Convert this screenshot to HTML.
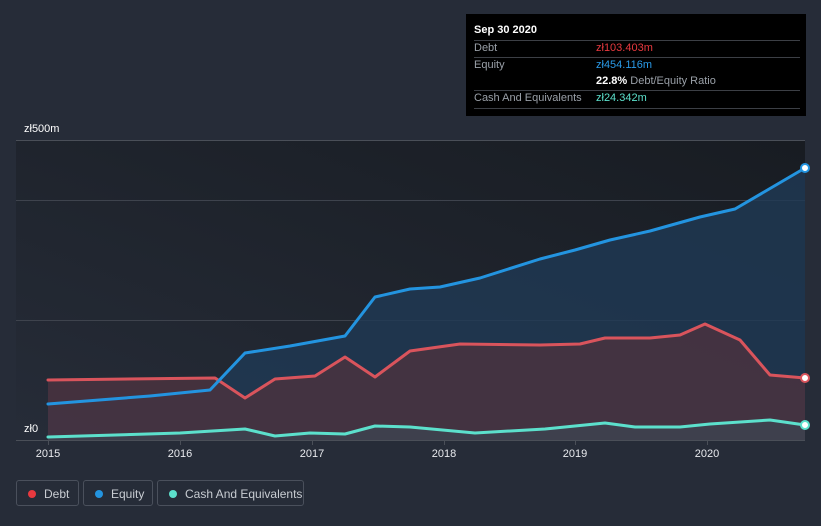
<!DOCTYPE html>
<html><head><meta charset="utf-8"><style>
body{margin:0;width:821px;height:526px;background:#262c38;font-family:"Liberation Sans",sans-serif;overflow:hidden;position:relative}
.tt{position:absolute;left:466px;top:14px;width:340px;height:102px;background:#000;}
.tt div{position:absolute;font-size:11px;color:#9aa0a8}
.ln{position:absolute;left:8px;width:326px;height:1px;background:#3c3f45}
.lg{position:absolute;top:480px;height:26px;border:1px solid #4a505c;border-radius:3px;color:#c8ccd2;font-size:12px;line-height:26px;box-sizing:border-box}
.lg i{position:absolute;left:11px;top:9px;width:8px;height:8px;border-radius:50%}
.lg span{position:absolute;left:27px}
</style></head><body>
<svg width="821" height="526" style="position:absolute;left:0;top:0">
<defs><linearGradient id="bg" x1="0" y1="1" x2="1" y2="0"><stop offset="0" stop-color="#262c38"/><stop offset="1" stop-color="#181c22"/></linearGradient></defs>
<rect x="16" y="140" width="789" height="300" fill="url(#bg)"/>
<g stroke="#3e434d" stroke-width="1"><line x1="16" y1="140.5" x2="805" y2="140.5" stroke="#4a4f58"/><line x1="16" y1="200.5" x2="805" y2="200.5"/><line x1="16" y1="320.5" x2="805" y2="320.5"/><line x1="16" y1="440.5" x2="805" y2="440.5" stroke="#4a4f58"/></g>
<g stroke="#4a4f58"><line x1="48.5" y1="440" x2="48.5" y2="445"/><line x1="180.5" y1="440" x2="180.5" y2="445"/><line x1="312.5" y1="440" x2="312.5" y2="445"/><line x1="444.5" y1="440" x2="444.5" y2="445"/><line x1="575.5" y1="440" x2="575.5" y2="445"/><line x1="707.5" y1="440" x2="707.5" y2="445"/></g>
<polygon fill="#1f3a55" fill-opacity="0.8" points="48,404 150,396 210,390 245,353 290,346 345,336 375,297 410,289 440,287 480,278 540,259 575,250 610,240 650,231 700,217 735,209 805,168 805,440 48,440"/>
<polygon fill="#4a3340" fill-opacity="0.85" points="48,380 215,378 245,398 275,379 315,376 345,357 375,377 410,351 460,344 540,345 580,344 605,338 650,338 680,335 705,324 740,340 770,375 805,378 805,440 48,440"/>
<polygon fill="#3c4a55" fill-opacity="0.6" points="48,437 180,433 245,429 275,436 310,433 345,434 375,426 410,427 475,433 545,429 605,423 635,427 680,427 710,424 770,420 805,425 805,440 48,440"/>
<g fill="none" stroke-width="3" stroke-linejoin="round" stroke-linecap="round">
<polyline stroke="#d9545c" points="48,380 215,378 245,398 275,379 315,376 345,357 375,377 410,351 460,344 540,345 580,344 605,338 650,338 680,335 705,324 740,340 770,375 805,378"/>
<polyline stroke="#2394e0" points="48,404 150,396 210,390 245,353 290,346 345,336 375,297 410,289 440,287 480,278 540,259 575,250 610,240 650,231 700,217 735,209 805,168"/>
<polyline stroke="#5ce0cc" points="48,437 180,433 245,429 275,436 310,433 345,434 375,426 410,427 475,433 545,429 605,423 635,427 680,427 710,424 770,420 805,425"/>
</g>
<circle cx="805" cy="168" r="4" fill="#fff" stroke="#2394e0" stroke-width="2"/>
<circle cx="805" cy="378" r="4" fill="#fff" stroke="#d9545c" stroke-width="2"/>
<circle cx="805" cy="425" r="4" fill="#fff" stroke="#5ce0cc" stroke-width="2"/>
<g fill="#fff" font-size="11" font-family="Liberation Sans"><text x="24" y="132">zł500m</text><text x="24" y="432">zł0</text></g>
<g fill="#e8eaee" font-size="11" font-family="Liberation Sans" text-anchor="middle"><text x="48" y="457">2015</text><text x="180" y="457">2016</text><text x="312" y="457">2017</text><text x="444" y="457">2018</text><text x="575" y="457">2019</text><text x="707" y="457">2020</text></g>
</svg>
<div class="tt">
<div style="left:8px;top:10px;color:#fff;font-weight:bold">Sep 30 2020</div>
<div class="ln" style="top:26px"></div>
<div style="left:8px;top:28px">Debt</div><div style="left:130px;top:28px;color:#e8393f">zł103.403m</div>
<div class="ln" style="top:43px"></div>
<div style="left:8px;top:45px">Equity</div><div style="left:130px;top:45px;color:#2a9ae8">zł454.116m</div>
<div style="left:130px;top:61px"><b style="color:#fff">22.8%</b> Debt/Equity Ratio</div>
<div class="ln" style="top:76px"></div>
<div style="left:8px;top:78px">Cash And Equivalents</div><div style="left:130px;top:78px;color:#5ce0cc">zł24.342m</div>
<div class="ln" style="top:94px"></div>
</div>
<div class="lg" style="left:16px;width:63px"><i style="background:#e8393f"></i><span>Debt</span></div>
<div class="lg" style="left:83px;width:70px"><i style="background:#2394e0"></i><span>Equity</span></div>
<div class="lg" style="left:157px;width:147px"><i style="background:#5ce0cc"></i><span>Cash And Equivalents</span></div>
</body></html>
